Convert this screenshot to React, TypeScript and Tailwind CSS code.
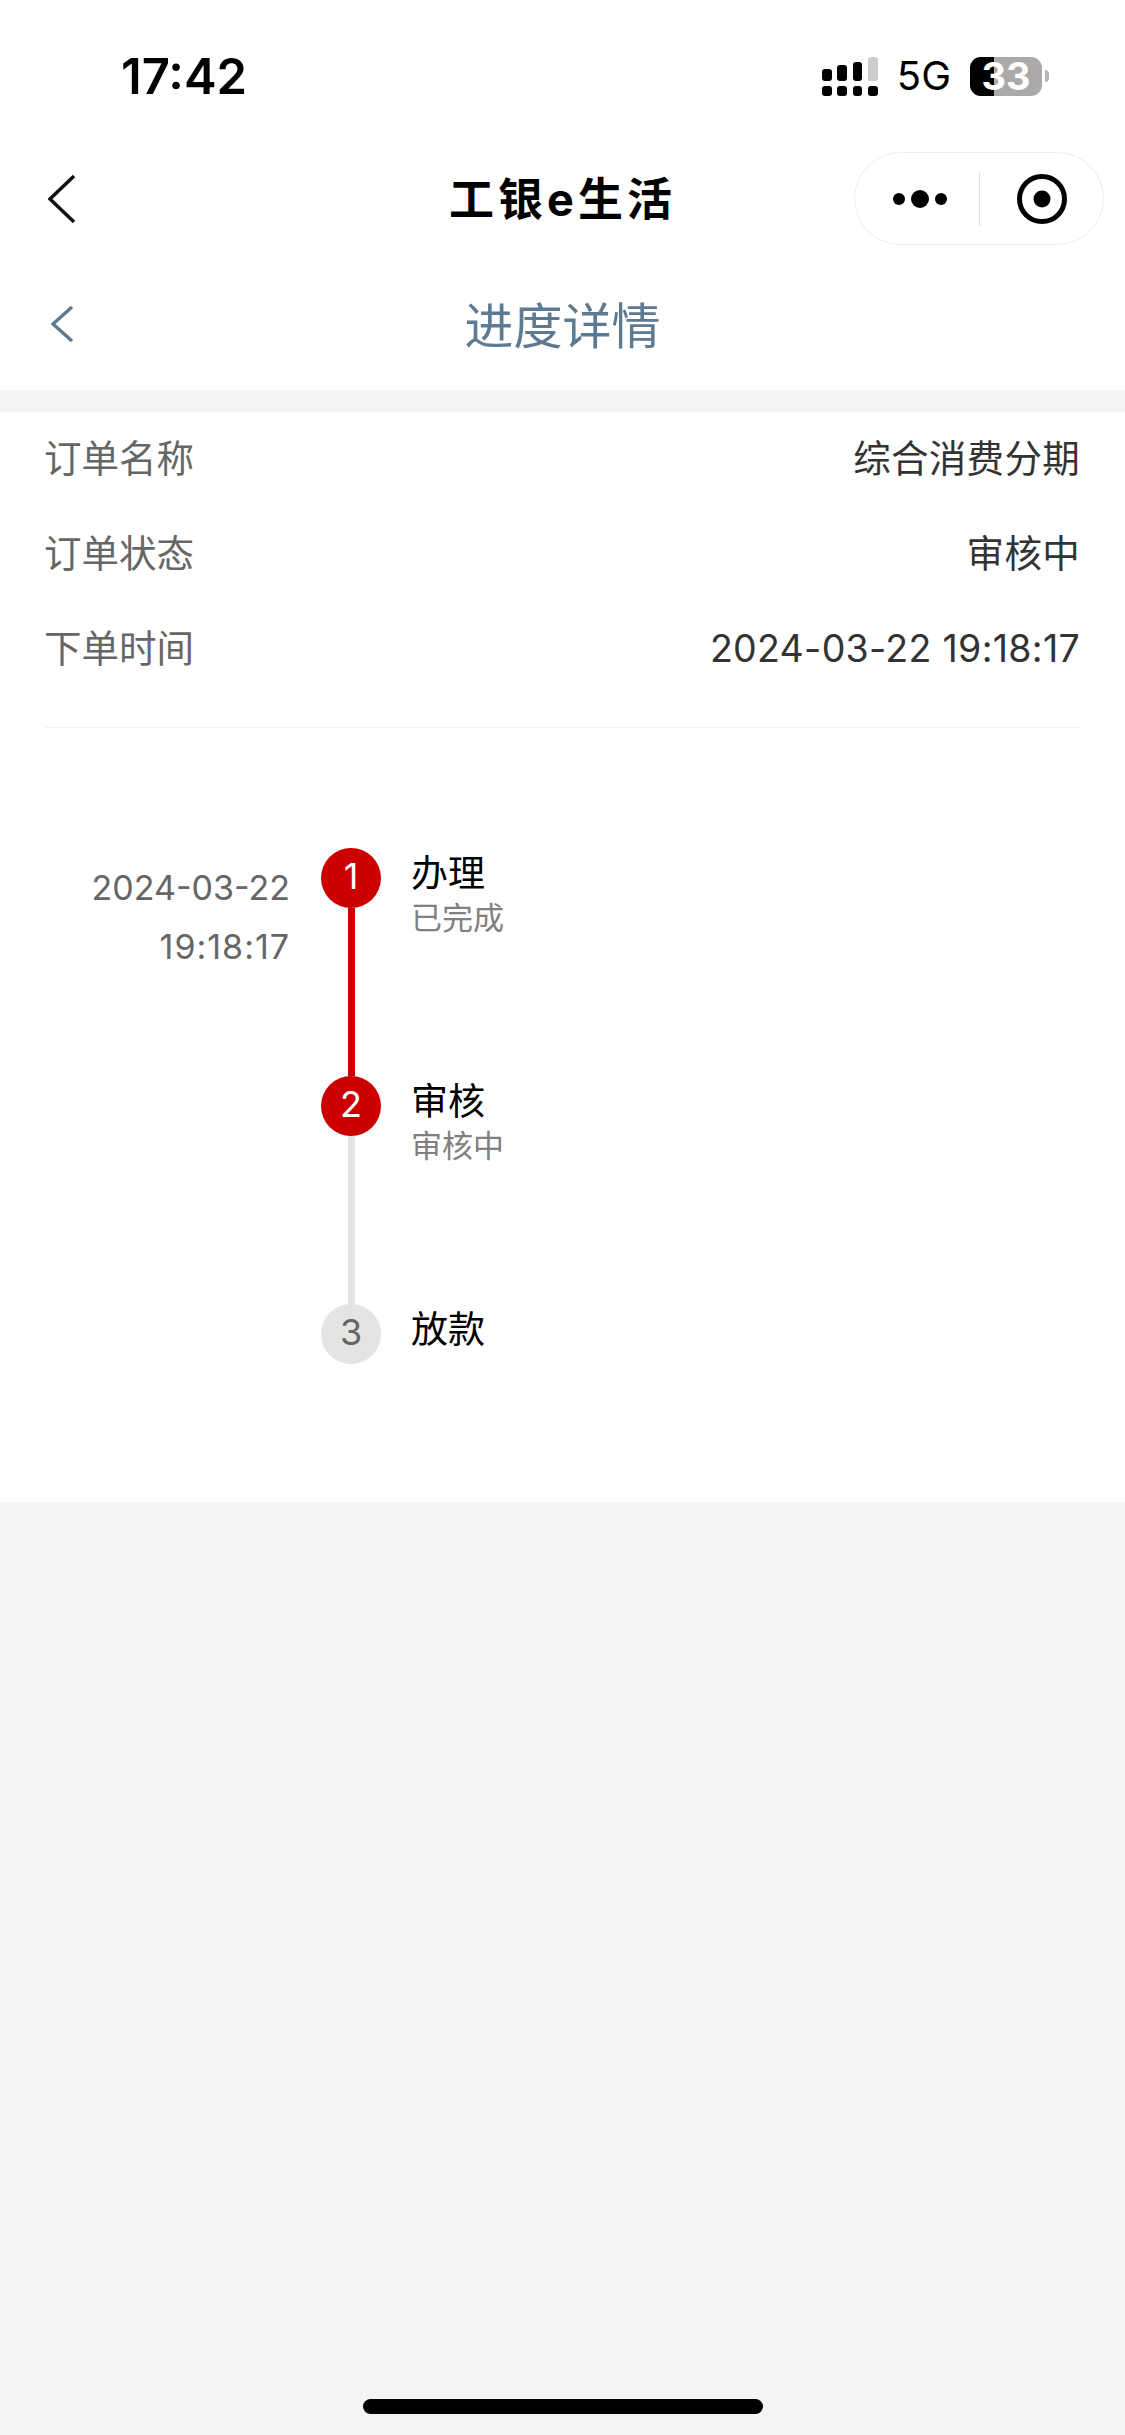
const FONT = "font-['Inter','Noto_Sans_CJK_SC',sans-serif]";

const infoRows = [
  { label: '订单名称', value: '综合消费分期' },
  { label: '订单状态', value: '审核中' },
  { label: '下单时间', value: '2024-03-22 19:18:17' },
];

const steps = [
  { n: 1, title: '办理', sub: '已完成', active: true, line: 'bg-[#cc0000]' },
  { n: 2, title: '审核', sub: '审核中', active: true, line: 'bg-[#e4e4e4]' },
  { n: 3, title: '放款', sub: '', active: false, line: '' },
];

function Signal() {
  return (
    <svg width="56" height="39" viewBox="0 0 56 39" fill="none">
      <rect x="0" y="12" width="10" height="12" rx="3" fill="#000" />
      <rect x="15" y="8" width="10" height="16" rx="3" fill="#000" />
      <rect x="31" y="5" width="9" height="19" rx="3" fill="#000" />
      <rect x="46" y="0" width="10" height="24" rx="3" fill="#cccccc" />
      <rect x="0" y="29" width="10" height="10" rx="3" fill="#000" />
      <rect x="15" y="29" width="10" height="10" rx="3" fill="#000" />
      <rect x="31" y="29" width="9" height="10" rx="3" fill="#000" />
      <rect x="46" y="29" width="10" height="10" rx="3" fill="#000" />
    </svg>
  );
}

function Battery() {
  return (
    <div className="flex items-center gap-[3px]">
      <div className="relative w-[72px] h-[39px] rounded-[11px] bg-[#aaaaaa] flex items-center justify-center">
        <div className="absolute left-0 top-0 bottom-0 w-[24px] rounded-l-[11px] bg-black" />
        <span className="relative text-[38px] leading-[39px] font-bold text-white">33</span>
      </div>
      <div className="w-[4px] h-[12px] rounded-r-full bg-[#b5b5b5]" />
    </div>
  );
}

function Chevron({ w, h, color, stroke }: { w: number; h: number; color: string; stroke: number }) {
  return (
    <svg width={w} height={h} viewBox={`0 0 ${w} ${h}`} fill="none">
      <path d={`M${w - 2} 2 L2 ${h / 2} L${w - 2} ${h - 2}`} stroke={color} strokeWidth={stroke} />
    </svg>
  );
}

function Capsule() {
  return (
    <div className="w-[250px] h-[93px] rounded-full border border-[#ededed] bg-white flex items-center">
      <div className="w-[124px] pl-[7px] flex justify-center">
        <svg width="56" height="20" viewBox="0 0 56 20" fill="#000">
          <circle cx="6" cy="10" r="6" />
          <circle cx="27" cy="10" r="9" />
          <circle cx="48" cy="10" r="6" />
        </svg>
      </div>
      <div className="w-[1px] h-[54px] bg-[#dcdcdc]" />
      <div className="flex-1 flex justify-center">
        <svg width="50" height="50" viewBox="0 0 50 50" fill="none">
          <circle cx="25" cy="25" r="22.5" stroke="#000" strokeWidth="5" />
          <circle cx="25" cy="25" r="8.5" fill="#000" />
        </svg>
      </div>
    </div>
  );
}

export default function App() {
  return (
    <div className={`w-[1125px] h-[2435px] bg-[#f3f4f6] flex flex-col ${FONT}`}>
      <div className="bg-white">
        <div className="h-[152px] flex items-center justify-between pl-[121px] pr-[76px]">
          <span className="text-[49px] font-semibold text-black leading-none">17:42</span>
          <div className="flex items-center gap-[19px]">
            <div className="flex items-center gap-[19px]">
              <Signal />
              <span className="text-[40px] text-black leading-none">5G</span>
            </div>
            <Battery />
          </div>
        </div>

        <div className="relative h-[94px] flex items-center justify-center">
          <div className="absolute left-[48px] top-[22px]">
            <Chevron w={28} h={50} color="#111111" stroke={3.5} />
          </div>
          <span className="text-[45px] font-bold text-black leading-none tracking-[4px]">工银e生活</span>
          <div className="absolute right-[21px] top-0">
            <Capsule />
          </div>
        </div>

        <div className="relative h-[144px] pt-[16px] flex items-center justify-center">
          <div className="absolute left-[51px] top-[59px]">
            <Chevron w={23} h={38} color="#5d7a91" stroke={3.5} />
          </div>
          <span className="text-[49px] text-[#5d7a91] leading-none">进度详情</span>
        </div>
      </div>

      <div className="mt-[22px] h-[1090px] bg-white">
        <div className="mx-[45px] pb-[30px] border-b border-[#f0f0f0]">
          {infoRows.map((row) => (
            <div key={row.label} className="h-[95px] flex items-center justify-between text-[37.5px]">
              <span className="-ml-[1px] text-[#666666]">{row.label}</span>
              <span className="text-[#333333] tracking-[0.3px]">{row.value}</span>
            </div>
          ))}
        </div>

        <div className="mt-[120px] flex flex-col">
          {steps.map((step, i) => (
            <div key={step.n} className="flex h-[228px]">
              <div className="w-[290px] pt-[10px] text-right text-[34px] leading-[59px] text-[#666666]">
                {i === 0 && (
                  <>
                    <div>2024-03-22</div>
                    <div className="tracking-[1px]">19:18:17</div>
                  </>
                )}
              </div>
              <div className="ml-[31px] w-[60px] flex flex-col items-center">
                <div
                  className={`w-[60px] h-[60px] shrink-0 rounded-full flex items-center justify-center pb-[4px] text-[36px] ${
                    step.active ? 'bg-[#cc0000] text-white' : 'bg-[#e4e4e4] text-[#666666]'
                  }`}
                >
                  {step.n}
                </div>
                {step.line && <div className={`w-[7px] flex-1 ${step.line}`} />}
              </div>
              <div className="ml-[30px] flex flex-col">
                <span className="text-[37px] leading-[51px] text-black">{step.title}</span>
                {step.sub && <span className="text-[31px] leading-[38px] text-[#808080]">{step.sub}</span>}
              </div>
            </div>
          ))}
        </div>
      </div>

      <div className="flex-1 flex flex-col justify-end items-center pb-[21px]">
        <div className="w-[400px] h-[15px] rounded-full bg-black" />
      </div>
    </div>
  );
}
